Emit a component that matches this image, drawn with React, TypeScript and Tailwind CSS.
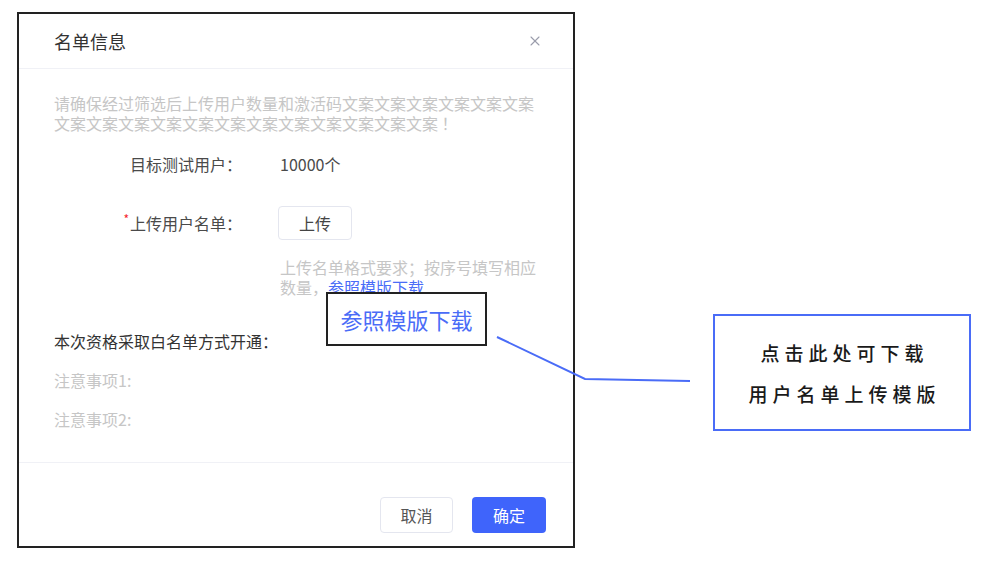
import {X} from 'lucide-react'

const notes = ['注意事项1:', '注意事项2:']

export default function App() {
    return (
        <div className="relative w-[1000px] h-[571px] bg-white font-['Noto_Sans_CJK_SC',sans-serif]">
            <div className="flex items-start pt-[12px] pl-[17px]">
                {/* dialog */}
                <div className="w-[558px] h-[536px] border-2 border-[#222] bg-white flex flex-col">
                    <div className="h-[55px] shrink-0 flex items-center justify-between pl-[35px] pr-[30px] border-b border-[#f0f1f6]">
                        <span className="text-[18px] text-[#333]">名单信息</span>
                        <X className="w-[16px] h-[16px] text-[#9a9cab]" strokeWidth={1.6}/>
                    </div>
                    <div className="flex-1 pl-[35px] pr-[30px] pt-[24px] border-b border-[#f0f1f6]">
                        <p className="text-[16px] leading-[20px] text-[#c6c6c6]">
                            请确保经过筛选后上传用户数量和激活码文案文案文案文案文案文案文案文案文案文案文案文案文案文案文案文案文案文案 ！
                        </p>
                        <div className="flex items-center mt-[19px] h-[24px]">
                            <span className="w-[188px] text-right text-[16px] text-[#4a4a4a]">目标测试用户：</span>
                            <span className="ml-[38px] text-[16px] text-[#4a4a4a]">10000个</span>
                        </div>
                        <div className="flex items-center mt-[30px]">
                            <span className="w-[188px] text-right text-[16px] text-[#4a4a4a]">
                                <span className="relative -top-[6px] mr-[1px] text-[12px] text-[#f5222d]">*</span>上传用户名单：
                            </span>
                            <button className="ml-[36px] w-[74px] h-[34px] rounded-[4px] border border-[#e4e6ef] bg-white text-[16px] text-[#444]">
                                上传
                            </button>
                        </div>
                        <p className="ml-[226px] mt-[17px] text-[16px] leading-[20px] text-[#c6c6c6]">
                            上传名单格式要求；按序号填写相应数量，<span className="text-[#4a6cf7] underline">参照模版下载</span>
                        </p>
                        <p className="mt-[34px] text-[16px] leading-[20px] text-[#333]">本次资格采取白名单方式开通：</p>
                        {notes.map((n) => (
                            <p key={n} className="mt-[19px] text-[16px] leading-[20px] text-[#c6c6c6]">{n}</p>
                        ))}
                    </div>
                    <div className="h-[83px] shrink-0 flex justify-end gap-[19px] pt-[34px] pr-[27px]">
                        <button className="w-[73px] h-[36px] rounded-[4px] border border-[#e4e6ef] bg-white text-[16px] text-[#555]">取消</button>
                        <button className="w-[74px] h-[36px] rounded-[4px] bg-[#3f64fb] text-[16px] text-white">确定</button>
                    </div>
                </div>

                {/* annotation */}
                <div className="ml-[138px] mt-[302px] w-[258px] h-[117px] border-2 border-[#4a6cf7] flex flex-col items-center justify-center text-[19px] leading-[41px] font-medium tracking-[5px] text-[#1a1a1a]">
                    <span className="pl-[5px]">点击此处可下载</span>
                    <span className="pl-[5px]">用户名单上传模版</span>
                </div>
            </div>

            <svg className="absolute inset-0 pointer-events-none" width="1000" height="571">
                <polyline points="497,337 585,379 690,381" fill="none" stroke="#4a6cf7" strokeWidth="2"/>
            </svg>

            <div className="absolute left-[326px] top-[292px] w-[161px] h-[54px] border-2 border-[#222] bg-white flex items-center justify-center text-[22px] text-[#4a6cf7]">
                参照模版下载
            </div>
        </div>
    )
}
